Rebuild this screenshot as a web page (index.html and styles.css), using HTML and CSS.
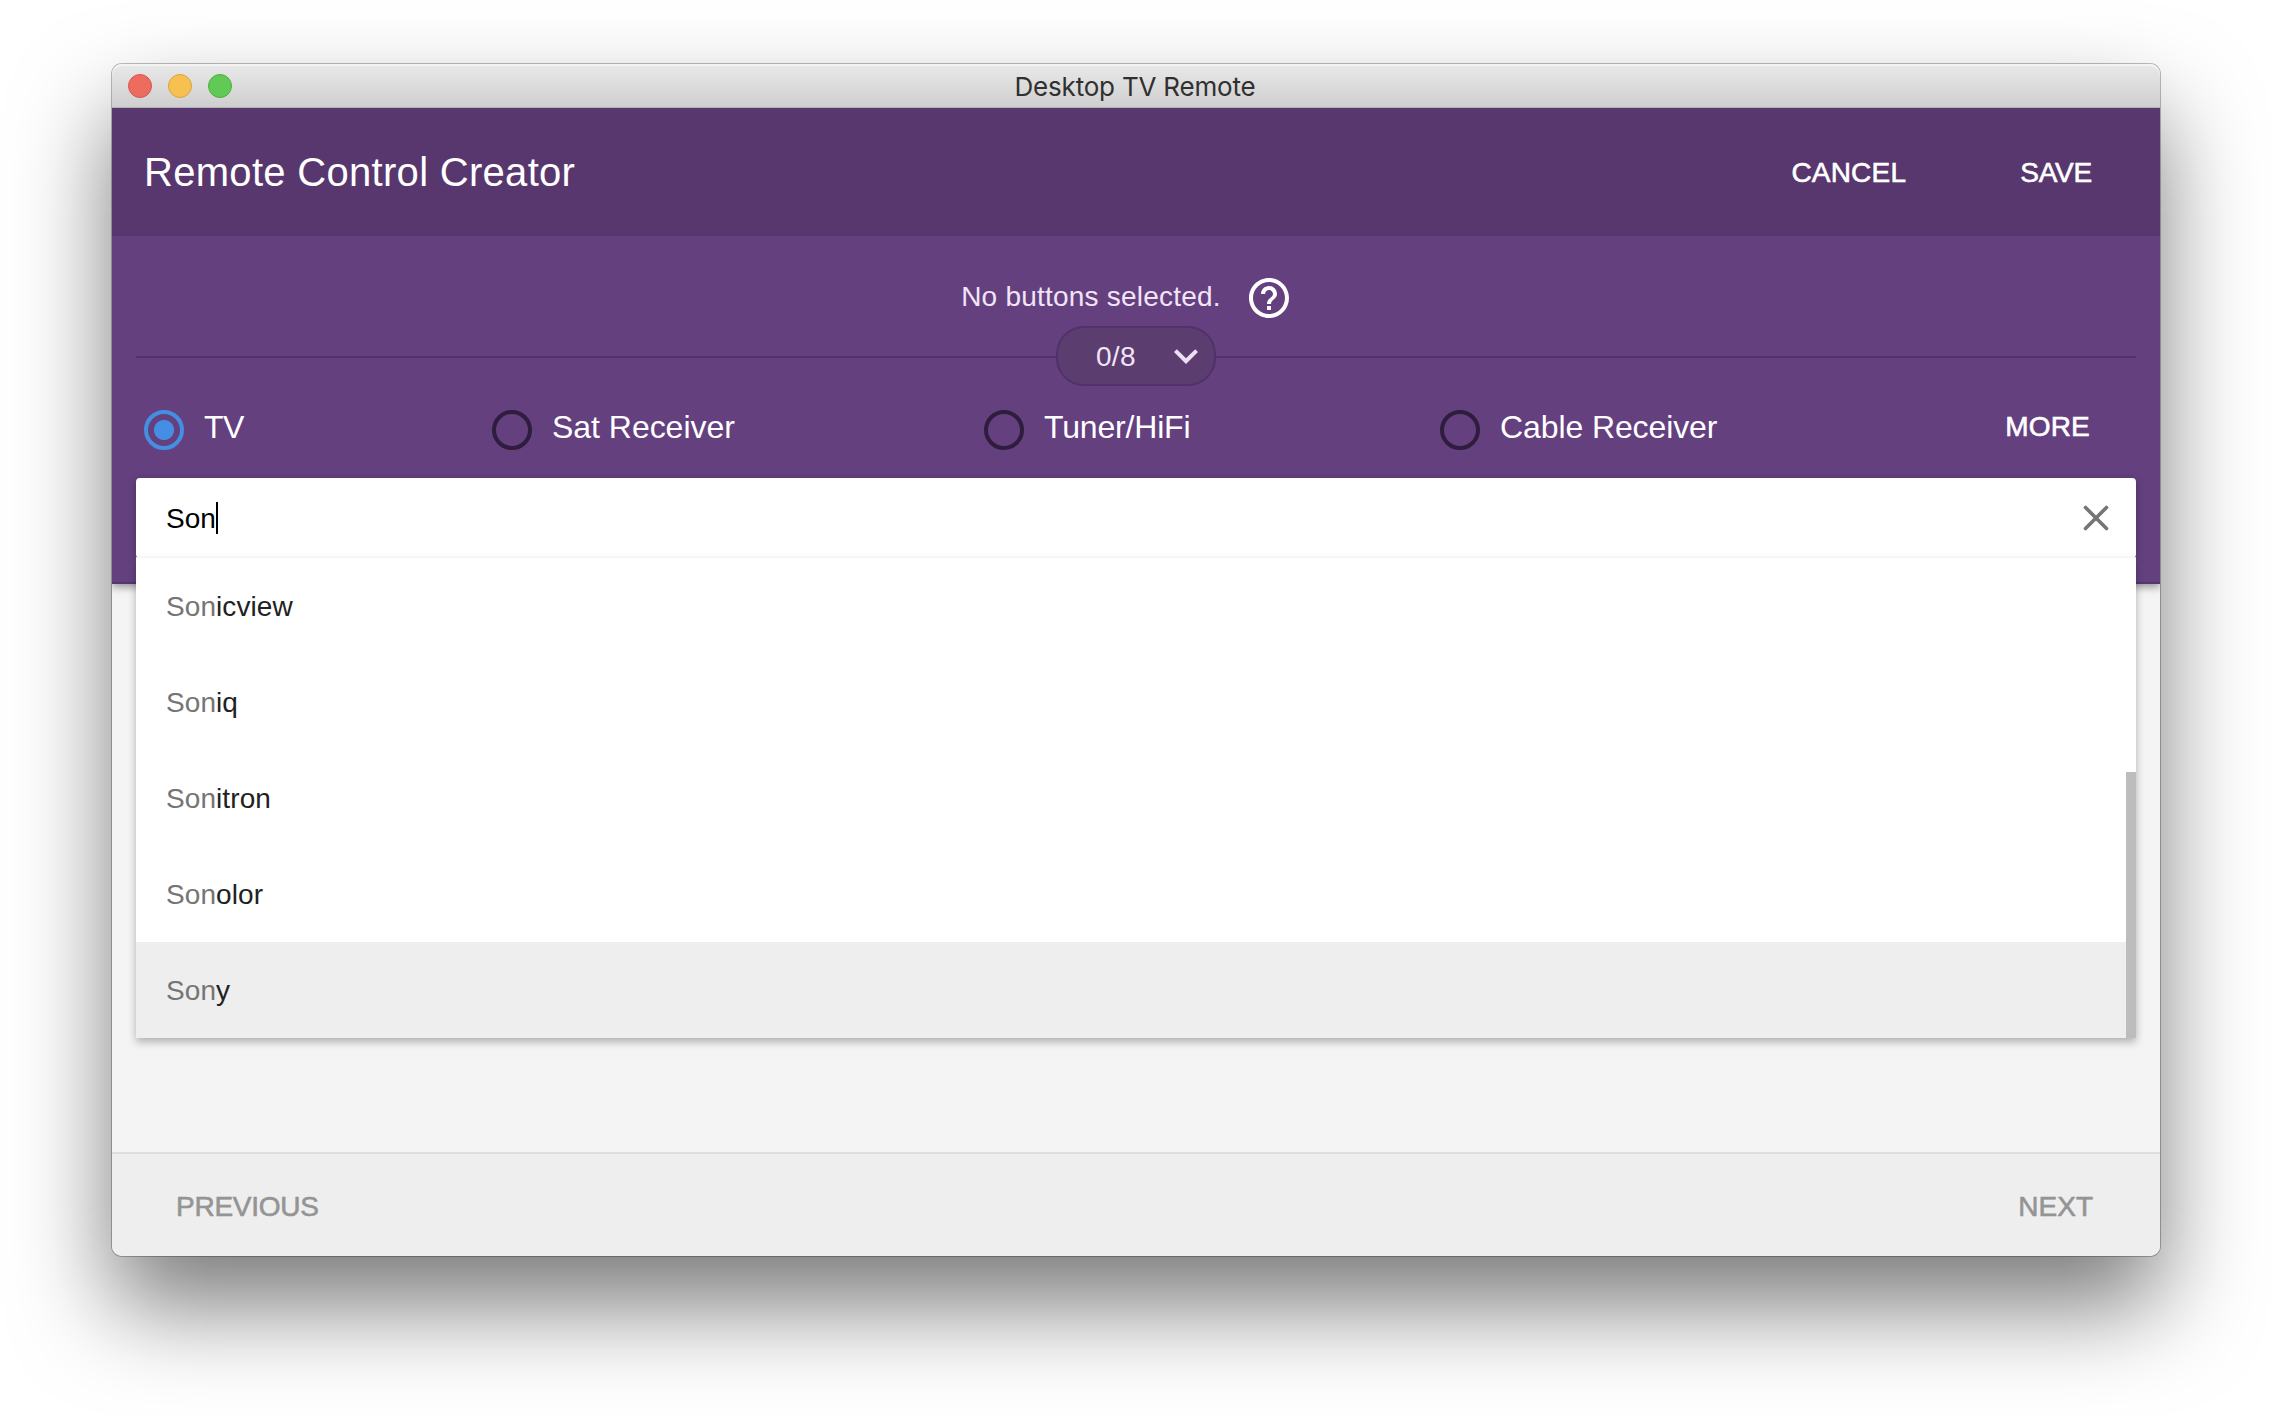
FILE: index.html
```html
<!DOCTYPE html>
<html lang="en">
<head>
<meta charset="utf-8">
<title>Desktop TV Remote</title>
<link rel="stylesheet" href="styles.css">
</head>
<body>
<div class="window">
  <div class="titlebar">
    <div class="lights"><i class="light close"></i><i class="light minimize"></i><i class="light maximize"></i></div>
    <span class="window-title">Desktop TV Remote</span>
    <span></span>
  </div>
  <div class="app">
    <header class="toolbar">
      <h1 class="heading">Remote Control Creator</h1>
      <span class="action cancel">CANCEL</span>
      <span class="action save">SAVE</span>
    </header>
    <section class="panel">
      <div class="status">
        <span class="status-text">No buttons selected.</span>
        <svg class="help" viewBox="0 0 24 24"><path d="M11 18h2v-2h-2v2zm1-16C6.48 2 2 6.48 2 12s4.48 10 10 10 10-4.480 10-10S17.520 2 12 2zm0 18c-4.410 0-8-3.590-8-8s3.590-8 8-8 8 3.590 8 8-3.590 8-8 8zm0-14c-2.210 0-4 1.790-4 4h2c0-1.100.9-2 2-2s2 .9 2 2c0 2-3 1.750-3 5h2c0-2.250 3-2.500 3-5 0-2.210-1.790-4-4-4z"/></svg>
      </div>
      <div class="counter-row">
        <span class="rule"></span>
        <div class="counter">
          <span class="count">0/8</span>
          <svg class="chevron" viewBox="0 0 24 24"><path d="M16.59 8.59L12 13.170 7.410 8.590 6 10l6 6 6-6z"/></svg>
        </div>
        <span class="rule"></span>
      </div>
      <div class="devices">
        <label class="device tv"><i class="radio checked"></i><span class="device-name">TV</span></label>
        <label class="device sat"><i class="radio"></i><span class="device-name">Sat Receiver</span></label>
        <label class="device tuner"><i class="radio"></i><span class="device-name">Tuner/HiFi</span></label>
        <label class="device cable"><i class="radio"></i><span class="device-name">Cable Receiver</span></label>
        <span class="action more">MORE</span>
      </div>
      <div class="search">
        <span class="query">Son</span><i class="caret"></i>
        <svg class="clear" viewBox="0 0 26 26"><path d="M2.500 2.500l21 21M23.500 2.500l-21 21"/></svg>
        <ul class="suggestions">
          <li class="item"><span class="match">Son</span>icview</li>
          <li class="item"><span class="match">Son</span>iq</li>
          <li class="item"><span class="match">Son</span>itron</li>
          <li class="item"><span class="match">Son</span>olor</li>
          <li class="item active"><span class="match">Son</span>y</li>
          <li class="thumb"></li>
        </ul>
      </div>
    </section>
    <main class="content"></main>
    <footer class="footer">
      <span class="action previous">PREVIOUS</span>
      <span class="action next">NEXT</span>
    </footer>
  </div>
</div>
</body>
</html>
```
FILE: styles.css
```css
* { box-sizing: border-box; }

body {
  margin: 0;
  padding: 64px 112px;
  height: 1416px;
  overflow: hidden;
  background: #fff;
  font-family: "Liberation Sans", Arial, sans-serif;
  font-size: 28px;
}

.window {
  display: flex;
  flex-direction: column;
  width: 2048px;
  height: 1192px;
  border-radius: 10px;
  background: #f4f4f4;
  box-shadow: 0 0 0 1px rgba(0, 0, 0, .26), 0 50px 96px rgba(0, 0, 0, .52);
}

.titlebar {
  display: grid;
  grid-template-columns: 1fr auto 1fr;
  align-items: center;
  height: 44px;
  padding: 0 16px;
  border-radius: 10px 10px 0 0;
  border-bottom: 1px solid #b0b0b0;
  background: linear-gradient(#e9e9e9, #cfcfcf);
  box-shadow: inset 0 2px 0 #f3f3f3;
}

.lights { display: flex; gap: 16px; }
.light { width: 24px; height: 24px; border-radius: 50%; border: 1px solid; }
.close { background: #ee6b60; border-color: #d9564c; }
.minimize { background: #f6c151; border-color: #dba33e; }
.maximize { background: #61c956; border-color: #4cae40; }

.window-title {
  padding: 2px 2px 0 0;
  font: 26px/40px Inter, sans-serif;
  letter-spacing: -.2px;
  color: #303030;
}

.app {
  flex: 1;
  display: flex;
  flex-direction: column;
  overflow: hidden;
  border-radius: 0 0 10px 10px;
}

.toolbar {
  position: relative;
  z-index: 1;
  display: flex;
  align-items: center;
  height: 128px;
  padding: 0 68px 0 32px;
  background: #58376e;
  color: #fff;
}

.heading {
  margin: 0 auto 0 0;
  font-size: 40px;
  font-weight: 400;
  letter-spacing: .3px;
}

.action { letter-spacing: .2px; -webkit-text-stroke: .6px currentColor; white-space: nowrap; }
.cancel { margin-right: 114px; padding-top: 2px; }
.save { padding-top: 2px; letter-spacing: -.2px; }

.panel {
  position: relative;
  height: 348px;
  padding: 36px 24px 0;
  border-bottom: 2px solid #573672;
  background: #64407f;
  box-shadow: 0 3px 8px rgba(0, 0, 0, .4);
}

.status {
  display: flex;
  justify-content: center;
  align-items: center;
  gap: 24px;
  height: 54px;
  padding-right: 18px;
  color: #f1e4f7;
}
.status-text { letter-spacing: .22px; line-height: 50px; padding-bottom: 4px; }
.help { width: 48px; height: 48px; margin-bottom: 3px; fill: #fff; }

.counter-row { display: flex; align-items: center; height: 60px; }
.rule { flex: 1; height: 2px; background: #50316a; margin-top: 2px; }
.counter {
  display: flex;
  align-items: center;
  width: 160px;
  height: 60px;
  padding-left: 38px;
  border: 2px solid #50316a;
  border-radius: 28px;
  background: #5b3d70;
  color: #f1e4f7;
}
.count { width: 66px; padding-top: 2px; letter-spacing: .3px; }
.chevron { width: 48px; height: 48px; fill: #ecdff2; }

.devices { display: flex; align-items: center; height: 88px; padding: 0 46px 0 8px; color: #fff; }
.device { display: flex; align-items: center; gap: 20px; font-size: 32px; white-space: nowrap; }
.radio { flex: none; width: 40px; height: 40px; border: 4px solid #2e1d3c; border-radius: 50%; }
.checked { border: 4px solid #448fe3; background: radial-gradient(circle, #448fe3 9.500px, transparent 10.500px); }
.device-name { padding-bottom: 6px; }
.tv { width: 348px; letter-spacing: -.6px; }
.sat { width: 492px; letter-spacing: -.03px; }
.tuner { width: 456px; letter-spacing: -.18px; }
.cable { letter-spacing: -.1px; }
.more { margin-left: auto; padding-bottom: 6px; }

.search {
  position: relative;
  display: flex;
  align-items: center;
  height: 80px;
  margin-top: 4px;
  padding: 0 27px 0 30px;
  border-radius: 4px;
  background: #fff;
  color: #000;
  box-shadow: 0 2px 8px rgba(0, 0, 0, .25);
}
.query { padding-top: 2px; }
.caret { width: 2px; height: 32px; background: #000; }
.clear { width: 26px; height: 26px; margin-left: auto; fill: none; stroke: #757575; stroke-width: 3.600; stroke-linecap: round; }

/* Dropdown lies over the panel edge and the page below it */
.suggestions {
  position: absolute;
  top: 80px;
  left: 0;
  width: 100%;
  margin: 0;
  padding: 0;
  list-style: none;
  background: #fff;
  color: #212121;
  box-shadow: 0 -1px 0 #f3f3f3, 0 4px 8px rgba(0, 0, 0, .28);
}
.item { height: 96px; padding: 1px 0 0 30px; line-height: 96px; letter-spacing: .08px; }
.match { color: #757575; }
.active { background: #eee; }
.thumb { position: absolute; right: 0; bottom: 0; width: 10px; height: 266px; background: #bdbdbd; }

.content { flex: 1; }

.footer {
  display: flex;
  justify-content: space-between;
  align-items: center;
  height: 104px;
  padding: 4px 67px 0 64px;
  border-top: 2px solid #dedede;
  background: #eee;
  color: #949494;
}
.previous { letter-spacing: -.25px; }
.next { letter-spacing: 0; }
```
